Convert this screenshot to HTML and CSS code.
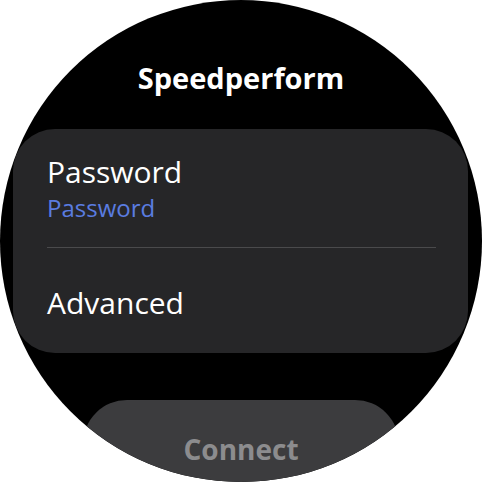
FILE: index.html
```html
<!DOCTYPE html>
<html>
<head>
<meta charset="utf-8">
<link rel="stylesheet" href="styles.css">
</head>
<body>
<div class="watch">
  <div class="title">Speedperform</div>
  <div class="card">
    <div class="row first">
      <div class="label">Password</div>
      <div class="sub">Password</div>
    </div>
    <div class="divider"></div>
    <div class="row second">
      <div class="label">Advanced</div>
    </div>
  </div>
  <div class="button">Connect</div>
</div>
</body>
</html>
```
FILE: styles.css
```css
html, body {
  margin: 0;
  padding: 0;
  background: #ffffff;
}
.watch {
  width: 482px;
  height: 482px;
  border-radius: 50%;
  background: #000000;
  overflow: hidden;
  display: flex;
  flex-direction: column;
  align-items: center;
  font-family: "Open Sans", Roboto, sans-serif;
}
.title {
  flex-shrink: 0;
  margin-top: 60px;
  height: 36px;
  line-height: 36px;
  font-size: 29px;
  font-weight: 700;
  color: #ffffff;
}
.card {
  flex-shrink: 0;
  margin-top: 33px;
  align-self: flex-start;
  margin-left: 13px;
  width: 455px;
  height: 224px;
  box-sizing: border-box;
  background: #262628;
  border-radius: 42px;
  padding: 0 32px 0 34px;
  display: flex;
  flex-direction: column;
}
.row.first {
  padding-top: 25px;
  height: 118px;
  box-sizing: border-box;
}
.label {
  font-size: 30px;
  line-height: 36px;
  color: #ffffff;
}
.sub {
  margin-top: 3px;
  font-size: 24px;
  line-height: 30px;
  color: #5a7ce0;
}
.divider {
  height: 1px;
  background: #4a4a4c;
}
.row.second {
  padding-top: 37px;
}
.button {
  flex-shrink: 0;
  margin-top: 47px;
  width: 316px;
  height: 120px;
  background: #3c3c3e;
  border-radius: 44px;
  text-align: center;
  padding-top: 31px;
  box-sizing: border-box;
  font-size: 28px;
  font-weight: 700;
  line-height: 36px;
  color: #8c8c8e;
}
```
